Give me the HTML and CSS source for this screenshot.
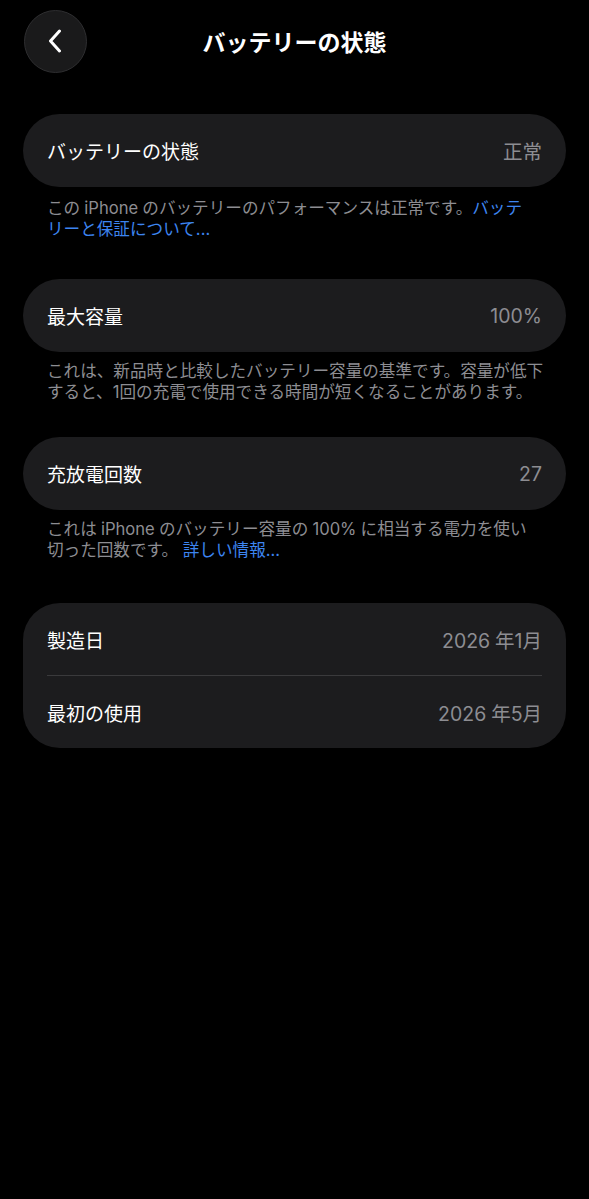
FILE: index.html
```html
<!DOCTYPE html>
<html lang="ja">

<head>
    <meta charset="UTF-8">
    <meta name="viewport" content="width=device-width, initial-scale=1.0">
    <title>バッテリーの状態</title>
    <link rel="stylesheet" href="styles.css">
</head>

<body>
    <div class="page">
        <!-- 顶部导航 -->
        <div class="nav">
            <a href="javascript:void(0);" class="back">
                <svg width="14" height="24" viewBox="0 0 14 24">
                    <path d="M11.5 2 L2.5 12 L11.5 22" fill="none" stroke="#fff" stroke-width="3" stroke-linecap="round" stroke-linejoin="round" />
                </svg>
            </a>
            <p class="title">バッテリーの状態</p>
        </div>

        <div class="group">
            <div class="card">
                <div class="row">
                    <span class="label">バッテリーの状態</span>
                    <span class="value">正常</span>
                </div>
            </div>
            <p class="note">この&#8197;iPhone&#8197;のバッテリーのパフォーマンスは正常です。<a href="#">バッテ<br>リーと保証について...</a></p>
        </div>

        <div class="group">
            <div class="card">
                <div class="row">
                    <span class="label">最大容量</span>
                    <span class="value">100%</span>
                </div>
            </div>
            <p class="note">これは、新品時と比較したバッテリー容量の基準です。容量が低下<br>すると、1回の充電で使用できる時間が短くなることがあります。</p>
        </div>

        <div class="group">
            <div class="card">
                <div class="row">
                    <span class="label">充放電回数</span>
                    <span class="value">27</span>
                </div>
            </div>
            <p class="note">これは&#8197;iPhone&#8197;のバッテリー容量の&#8197;100%&#8197;に相当する電力を使い<br>切った回数です。 <a href="#">詳しい情報...</a></p>
        </div>

        <div class="group">
            <div class="card">
                <div class="row">
                    <span class="label">製造日</span>
                    <span class="value">2026&#8197;年1月</span>
                </div>
                <div class="line"></div>
                <div class="row">
                    <span class="label">最初の使用</span>
                    <span class="value">2026&#8197;年5月</span>
                </div>
            </div>
        </div>
    </div>
</body>

</html>
```

FILE: styles.css
```css
/* 基础样式 */
html,
body {
    margin: 0;
    padding: 0;
    background: #000;
}

body {
    font-family: "Inter", "Noto Sans CJK JP", sans-serif;
    color: #fff;
    height: 1199px;
}

p {
    margin: 0;
}

.page {
    padding: 9px 23px 0;
}

/* 导航栏 */
.nav {
    display: flex;
    align-items: center;
    height: 64px;
    position: relative;
}

.back {
    display: flex;
    align-items: center;
    justify-content: center;
    width: 63px;
    height: 63px;
    margin-left: 1px;
    border-radius: 50%;
    background-color: #1a1a1b;
    border: 1px solid #2e2e30;
    padding-right: 2px;
    box-sizing: border-box;
}

.title {
    position: absolute;
    left: 0;
    right: 0;
    text-align: center;
    font-size: 23px;
    font-weight: bold;
    pointer-events: none;
}

/* 分组 */
.group {
    margin-top: 41px;
}

.group:nth-child(3) {
    margin-top: 39px;
}

.group:nth-child(4) {
    margin-top: 34px;
}

.group:nth-child(5) {
    margin-top: 42px;
}

.card {
    background-color: #1c1c1e;
    border-radius: 37px;
    padding: 0 24px;
}

.row {
    display: flex;
    align-items: center;
    justify-content: space-between;
    height: 73px;
}

.card .row:first-child:not(:last-child) {
    height: 72px;
}

.card .line + .row {
    height: 72px;
}

.label {
    font-size: 19px;
}

.value {
    font-size: 19.5px;
    color: #8d8d92;
}

.line {
    height: 1px;
    background-color: #3a3a3c;
}

/* 说明文字 */
.note {
    margin-top: 11px;
    padding: 0 24px;
    font-size: 16.6px;
    line-height: 21px;
    color: #8d8d92;
    white-space: nowrap;
}

.group:nth-child(3) .note,
.group:nth-child(4) .note {
    margin-top: 9px;
}

.note a {
    color: #3d85f0;
    text-decoration: none;
}
```
